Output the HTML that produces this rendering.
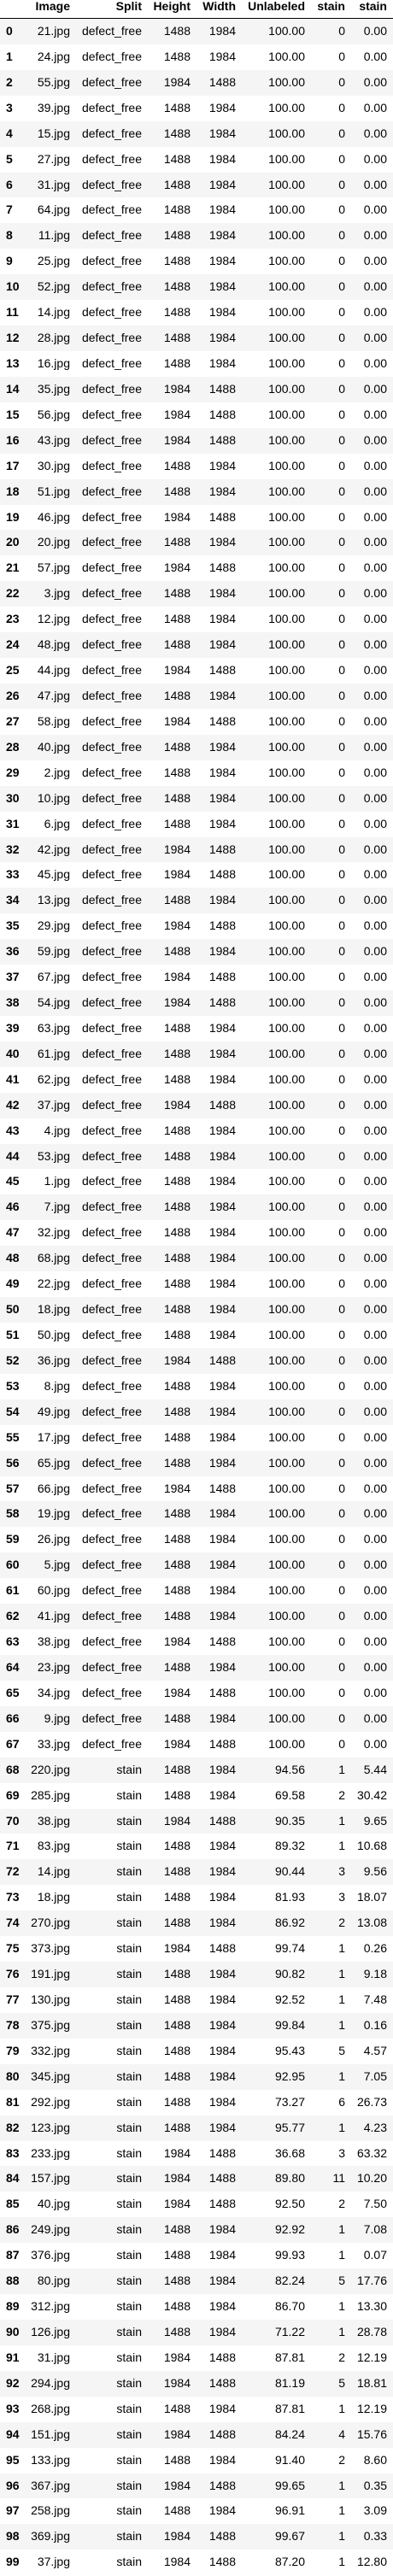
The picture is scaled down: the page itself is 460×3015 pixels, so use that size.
<!DOCTYPE html>
<html><head><meta charset="utf-8"><style>
*{margin:0;padding:0;box-sizing:border-box}
body{width:460px;height:3015px;background:#fff;font-family:"Liberation Sans",Arial,sans-serif;font-size:14px;color:#000;overflow:hidden}
.r{display:flex;height:29.93px;line-height:29.93px;white-space:nowrap}
.r:nth-child(odd){background:#f5f5f5}
.h{display:flex;height:22px;line-height:15px;border-bottom:1px solid #000;font-weight:bold;white-space:nowrap}
.r>span,.h>span{display:block;text-align:right;padding-right:5px}
.r>span:nth-child(1),.h>span:nth-child(1){width:35px;text-align:left;padding-left:7px;font-weight:bold}
span:nth-child(2){width:52px}
span:nth-child(3){width:84px}
span:nth-child(4){width:57px}
span:nth-child(5){width:53px}
span:nth-child(6){width:81px}
span:nth-child(7){width:47px}
span:nth-child(8){width:49px}
</style></head><body>
<div class="h"><span></span><span>Image</span><span>Split</span><span>Height</span><span>Width</span><span>Unlabeled</span><span>stain</span><span>stain</span></div>
<div>
<div class="r"><span>0</span><span>21.jpg</span><span>defect_free</span><span>1488</span><span>1984</span><span>100.00</span><span>0</span><span>0.00</span></div>
<div class="r"><span>1</span><span>24.jpg</span><span>defect_free</span><span>1488</span><span>1984</span><span>100.00</span><span>0</span><span>0.00</span></div>
<div class="r"><span>2</span><span>55.jpg</span><span>defect_free</span><span>1984</span><span>1488</span><span>100.00</span><span>0</span><span>0.00</span></div>
<div class="r"><span>3</span><span>39.jpg</span><span>defect_free</span><span>1488</span><span>1984</span><span>100.00</span><span>0</span><span>0.00</span></div>
<div class="r"><span>4</span><span>15.jpg</span><span>defect_free</span><span>1488</span><span>1984</span><span>100.00</span><span>0</span><span>0.00</span></div>
<div class="r"><span>5</span><span>27.jpg</span><span>defect_free</span><span>1488</span><span>1984</span><span>100.00</span><span>0</span><span>0.00</span></div>
<div class="r"><span>6</span><span>31.jpg</span><span>defect_free</span><span>1488</span><span>1984</span><span>100.00</span><span>0</span><span>0.00</span></div>
<div class="r"><span>7</span><span>64.jpg</span><span>defect_free</span><span>1488</span><span>1984</span><span>100.00</span><span>0</span><span>0.00</span></div>
<div class="r"><span>8</span><span>11.jpg</span><span>defect_free</span><span>1488</span><span>1984</span><span>100.00</span><span>0</span><span>0.00</span></div>
<div class="r"><span>9</span><span>25.jpg</span><span>defect_free</span><span>1488</span><span>1984</span><span>100.00</span><span>0</span><span>0.00</span></div>
<div class="r"><span>10</span><span>52.jpg</span><span>defect_free</span><span>1488</span><span>1984</span><span>100.00</span><span>0</span><span>0.00</span></div>
<div class="r"><span>11</span><span>14.jpg</span><span>defect_free</span><span>1488</span><span>1984</span><span>100.00</span><span>0</span><span>0.00</span></div>
<div class="r"><span>12</span><span>28.jpg</span><span>defect_free</span><span>1488</span><span>1984</span><span>100.00</span><span>0</span><span>0.00</span></div>
<div class="r"><span>13</span><span>16.jpg</span><span>defect_free</span><span>1488</span><span>1984</span><span>100.00</span><span>0</span><span>0.00</span></div>
<div class="r"><span>14</span><span>35.jpg</span><span>defect_free</span><span>1984</span><span>1488</span><span>100.00</span><span>0</span><span>0.00</span></div>
<div class="r"><span>15</span><span>56.jpg</span><span>defect_free</span><span>1984</span><span>1488</span><span>100.00</span><span>0</span><span>0.00</span></div>
<div class="r"><span>16</span><span>43.jpg</span><span>defect_free</span><span>1984</span><span>1488</span><span>100.00</span><span>0</span><span>0.00</span></div>
<div class="r"><span>17</span><span>30.jpg</span><span>defect_free</span><span>1488</span><span>1984</span><span>100.00</span><span>0</span><span>0.00</span></div>
<div class="r"><span>18</span><span>51.jpg</span><span>defect_free</span><span>1488</span><span>1984</span><span>100.00</span><span>0</span><span>0.00</span></div>
<div class="r"><span>19</span><span>46.jpg</span><span>defect_free</span><span>1984</span><span>1488</span><span>100.00</span><span>0</span><span>0.00</span></div>
<div class="r"><span>20</span><span>20.jpg</span><span>defect_free</span><span>1488</span><span>1984</span><span>100.00</span><span>0</span><span>0.00</span></div>
<div class="r"><span>21</span><span>57.jpg</span><span>defect_free</span><span>1984</span><span>1488</span><span>100.00</span><span>0</span><span>0.00</span></div>
<div class="r"><span>22</span><span>3.jpg</span><span>defect_free</span><span>1488</span><span>1984</span><span>100.00</span><span>0</span><span>0.00</span></div>
<div class="r"><span>23</span><span>12.jpg</span><span>defect_free</span><span>1488</span><span>1984</span><span>100.00</span><span>0</span><span>0.00</span></div>
<div class="r"><span>24</span><span>48.jpg</span><span>defect_free</span><span>1488</span><span>1984</span><span>100.00</span><span>0</span><span>0.00</span></div>
<div class="r"><span>25</span><span>44.jpg</span><span>defect_free</span><span>1984</span><span>1488</span><span>100.00</span><span>0</span><span>0.00</span></div>
<div class="r"><span>26</span><span>47.jpg</span><span>defect_free</span><span>1488</span><span>1984</span><span>100.00</span><span>0</span><span>0.00</span></div>
<div class="r"><span>27</span><span>58.jpg</span><span>defect_free</span><span>1984</span><span>1488</span><span>100.00</span><span>0</span><span>0.00</span></div>
<div class="r"><span>28</span><span>40.jpg</span><span>defect_free</span><span>1488</span><span>1984</span><span>100.00</span><span>0</span><span>0.00</span></div>
<div class="r"><span>29</span><span>2.jpg</span><span>defect_free</span><span>1488</span><span>1984</span><span>100.00</span><span>0</span><span>0.00</span></div>
<div class="r"><span>30</span><span>10.jpg</span><span>defect_free</span><span>1488</span><span>1984</span><span>100.00</span><span>0</span><span>0.00</span></div>
<div class="r"><span>31</span><span>6.jpg</span><span>defect_free</span><span>1488</span><span>1984</span><span>100.00</span><span>0</span><span>0.00</span></div>
<div class="r"><span>32</span><span>42.jpg</span><span>defect_free</span><span>1984</span><span>1488</span><span>100.00</span><span>0</span><span>0.00</span></div>
<div class="r"><span>33</span><span>45.jpg</span><span>defect_free</span><span>1984</span><span>1488</span><span>100.00</span><span>0</span><span>0.00</span></div>
<div class="r"><span>34</span><span>13.jpg</span><span>defect_free</span><span>1488</span><span>1984</span><span>100.00</span><span>0</span><span>0.00</span></div>
<div class="r"><span>35</span><span>29.jpg</span><span>defect_free</span><span>1984</span><span>1488</span><span>100.00</span><span>0</span><span>0.00</span></div>
<div class="r"><span>36</span><span>59.jpg</span><span>defect_free</span><span>1488</span><span>1984</span><span>100.00</span><span>0</span><span>0.00</span></div>
<div class="r"><span>37</span><span>67.jpg</span><span>defect_free</span><span>1984</span><span>1488</span><span>100.00</span><span>0</span><span>0.00</span></div>
<div class="r"><span>38</span><span>54.jpg</span><span>defect_free</span><span>1984</span><span>1488</span><span>100.00</span><span>0</span><span>0.00</span></div>
<div class="r"><span>39</span><span>63.jpg</span><span>defect_free</span><span>1488</span><span>1984</span><span>100.00</span><span>0</span><span>0.00</span></div>
<div class="r"><span>40</span><span>61.jpg</span><span>defect_free</span><span>1488</span><span>1984</span><span>100.00</span><span>0</span><span>0.00</span></div>
<div class="r"><span>41</span><span>62.jpg</span><span>defect_free</span><span>1488</span><span>1984</span><span>100.00</span><span>0</span><span>0.00</span></div>
<div class="r"><span>42</span><span>37.jpg</span><span>defect_free</span><span>1984</span><span>1488</span><span>100.00</span><span>0</span><span>0.00</span></div>
<div class="r"><span>43</span><span>4.jpg</span><span>defect_free</span><span>1488</span><span>1984</span><span>100.00</span><span>0</span><span>0.00</span></div>
<div class="r"><span>44</span><span>53.jpg</span><span>defect_free</span><span>1488</span><span>1984</span><span>100.00</span><span>0</span><span>0.00</span></div>
<div class="r"><span>45</span><span>1.jpg</span><span>defect_free</span><span>1488</span><span>1984</span><span>100.00</span><span>0</span><span>0.00</span></div>
<div class="r"><span>46</span><span>7.jpg</span><span>defect_free</span><span>1488</span><span>1984</span><span>100.00</span><span>0</span><span>0.00</span></div>
<div class="r"><span>47</span><span>32.jpg</span><span>defect_free</span><span>1488</span><span>1984</span><span>100.00</span><span>0</span><span>0.00</span></div>
<div class="r"><span>48</span><span>68.jpg</span><span>defect_free</span><span>1488</span><span>1984</span><span>100.00</span><span>0</span><span>0.00</span></div>
<div class="r"><span>49</span><span>22.jpg</span><span>defect_free</span><span>1488</span><span>1984</span><span>100.00</span><span>0</span><span>0.00</span></div>
<div class="r"><span>50</span><span>18.jpg</span><span>defect_free</span><span>1488</span><span>1984</span><span>100.00</span><span>0</span><span>0.00</span></div>
<div class="r"><span>51</span><span>50.jpg</span><span>defect_free</span><span>1488</span><span>1984</span><span>100.00</span><span>0</span><span>0.00</span></div>
<div class="r"><span>52</span><span>36.jpg</span><span>defect_free</span><span>1984</span><span>1488</span><span>100.00</span><span>0</span><span>0.00</span></div>
<div class="r"><span>53</span><span>8.jpg</span><span>defect_free</span><span>1488</span><span>1984</span><span>100.00</span><span>0</span><span>0.00</span></div>
<div class="r"><span>54</span><span>49.jpg</span><span>defect_free</span><span>1488</span><span>1984</span><span>100.00</span><span>0</span><span>0.00</span></div>
<div class="r"><span>55</span><span>17.jpg</span><span>defect_free</span><span>1488</span><span>1984</span><span>100.00</span><span>0</span><span>0.00</span></div>
<div class="r"><span>56</span><span>65.jpg</span><span>defect_free</span><span>1488</span><span>1984</span><span>100.00</span><span>0</span><span>0.00</span></div>
<div class="r"><span>57</span><span>66.jpg</span><span>defect_free</span><span>1984</span><span>1488</span><span>100.00</span><span>0</span><span>0.00</span></div>
<div class="r"><span>58</span><span>19.jpg</span><span>defect_free</span><span>1488</span><span>1984</span><span>100.00</span><span>0</span><span>0.00</span></div>
<div class="r"><span>59</span><span>26.jpg</span><span>defect_free</span><span>1488</span><span>1984</span><span>100.00</span><span>0</span><span>0.00</span></div>
<div class="r"><span>60</span><span>5.jpg</span><span>defect_free</span><span>1488</span><span>1984</span><span>100.00</span><span>0</span><span>0.00</span></div>
<div class="r"><span>61</span><span>60.jpg</span><span>defect_free</span><span>1488</span><span>1984</span><span>100.00</span><span>0</span><span>0.00</span></div>
<div class="r"><span>62</span><span>41.jpg</span><span>defect_free</span><span>1488</span><span>1984</span><span>100.00</span><span>0</span><span>0.00</span></div>
<div class="r"><span>63</span><span>38.jpg</span><span>defect_free</span><span>1984</span><span>1488</span><span>100.00</span><span>0</span><span>0.00</span></div>
<div class="r"><span>64</span><span>23.jpg</span><span>defect_free</span><span>1488</span><span>1984</span><span>100.00</span><span>0</span><span>0.00</span></div>
<div class="r"><span>65</span><span>34.jpg</span><span>defect_free</span><span>1984</span><span>1488</span><span>100.00</span><span>0</span><span>0.00</span></div>
<div class="r"><span>66</span><span>9.jpg</span><span>defect_free</span><span>1488</span><span>1984</span><span>100.00</span><span>0</span><span>0.00</span></div>
<div class="r"><span>67</span><span>33.jpg</span><span>defect_free</span><span>1984</span><span>1488</span><span>100.00</span><span>0</span><span>0.00</span></div>
<div class="r"><span>68</span><span>220.jpg</span><span>stain</span><span>1488</span><span>1984</span><span>94.56</span><span>1</span><span>5.44</span></div>
<div class="r"><span>69</span><span>285.jpg</span><span>stain</span><span>1488</span><span>1984</span><span>69.58</span><span>2</span><span>30.42</span></div>
<div class="r"><span>70</span><span>38.jpg</span><span>stain</span><span>1984</span><span>1488</span><span>90.35</span><span>1</span><span>9.65</span></div>
<div class="r"><span>71</span><span>83.jpg</span><span>stain</span><span>1488</span><span>1984</span><span>89.32</span><span>1</span><span>10.68</span></div>
<div class="r"><span>72</span><span>14.jpg</span><span>stain</span><span>1488</span><span>1984</span><span>90.44</span><span>3</span><span>9.56</span></div>
<div class="r"><span>73</span><span>18.jpg</span><span>stain</span><span>1488</span><span>1984</span><span>81.93</span><span>3</span><span>18.07</span></div>
<div class="r"><span>74</span><span>270.jpg</span><span>stain</span><span>1488</span><span>1984</span><span>86.92</span><span>2</span><span>13.08</span></div>
<div class="r"><span>75</span><span>373.jpg</span><span>stain</span><span>1984</span><span>1488</span><span>99.74</span><span>1</span><span>0.26</span></div>
<div class="r"><span>76</span><span>191.jpg</span><span>stain</span><span>1488</span><span>1984</span><span>90.82</span><span>1</span><span>9.18</span></div>
<div class="r"><span>77</span><span>130.jpg</span><span>stain</span><span>1488</span><span>1984</span><span>92.52</span><span>1</span><span>7.48</span></div>
<div class="r"><span>78</span><span>375.jpg</span><span>stain</span><span>1488</span><span>1984</span><span>99.84</span><span>1</span><span>0.16</span></div>
<div class="r"><span>79</span><span>332.jpg</span><span>stain</span><span>1488</span><span>1984</span><span>95.43</span><span>5</span><span>4.57</span></div>
<div class="r"><span>80</span><span>345.jpg</span><span>stain</span><span>1488</span><span>1984</span><span>92.95</span><span>1</span><span>7.05</span></div>
<div class="r"><span>81</span><span>292.jpg</span><span>stain</span><span>1488</span><span>1984</span><span>73.27</span><span>6</span><span>26.73</span></div>
<div class="r"><span>82</span><span>123.jpg</span><span>stain</span><span>1488</span><span>1984</span><span>95.77</span><span>1</span><span>4.23</span></div>
<div class="r"><span>83</span><span>233.jpg</span><span>stain</span><span>1984</span><span>1488</span><span>36.68</span><span>3</span><span>63.32</span></div>
<div class="r"><span>84</span><span>157.jpg</span><span>stain</span><span>1984</span><span>1488</span><span>89.80</span><span>11</span><span>10.20</span></div>
<div class="r"><span>85</span><span>40.jpg</span><span>stain</span><span>1984</span><span>1488</span><span>92.50</span><span>2</span><span>7.50</span></div>
<div class="r"><span>86</span><span>249.jpg</span><span>stain</span><span>1488</span><span>1984</span><span>92.92</span><span>1</span><span>7.08</span></div>
<div class="r"><span>87</span><span>376.jpg</span><span>stain</span><span>1488</span><span>1984</span><span>99.93</span><span>1</span><span>0.07</span></div>
<div class="r"><span>88</span><span>80.jpg</span><span>stain</span><span>1488</span><span>1984</span><span>82.24</span><span>5</span><span>17.76</span></div>
<div class="r"><span>89</span><span>312.jpg</span><span>stain</span><span>1488</span><span>1984</span><span>86.70</span><span>1</span><span>13.30</span></div>
<div class="r"><span>90</span><span>126.jpg</span><span>stain</span><span>1488</span><span>1984</span><span>71.22</span><span>1</span><span>28.78</span></div>
<div class="r"><span>91</span><span>31.jpg</span><span>stain</span><span>1984</span><span>1488</span><span>87.81</span><span>2</span><span>12.19</span></div>
<div class="r"><span>92</span><span>294.jpg</span><span>stain</span><span>1984</span><span>1488</span><span>81.19</span><span>5</span><span>18.81</span></div>
<div class="r"><span>93</span><span>268.jpg</span><span>stain</span><span>1488</span><span>1984</span><span>87.81</span><span>1</span><span>12.19</span></div>
<div class="r"><span>94</span><span>151.jpg</span><span>stain</span><span>1984</span><span>1488</span><span>84.24</span><span>4</span><span>15.76</span></div>
<div class="r"><span>95</span><span>133.jpg</span><span>stain</span><span>1488</span><span>1984</span><span>91.40</span><span>2</span><span>8.60</span></div>
<div class="r"><span>96</span><span>367.jpg</span><span>stain</span><span>1984</span><span>1488</span><span>99.65</span><span>1</span><span>0.35</span></div>
<div class="r"><span>97</span><span>258.jpg</span><span>stain</span><span>1488</span><span>1984</span><span>96.91</span><span>1</span><span>3.09</span></div>
<div class="r"><span>98</span><span>369.jpg</span><span>stain</span><span>1984</span><span>1488</span><span>99.67</span><span>1</span><span>0.33</span></div>
<div class="r"><span>99</span><span>37.jpg</span><span>stain</span><span>1984</span><span>1488</span><span>87.20</span><span>1</span><span>12.80</span></div>
</div>
</body></html>
